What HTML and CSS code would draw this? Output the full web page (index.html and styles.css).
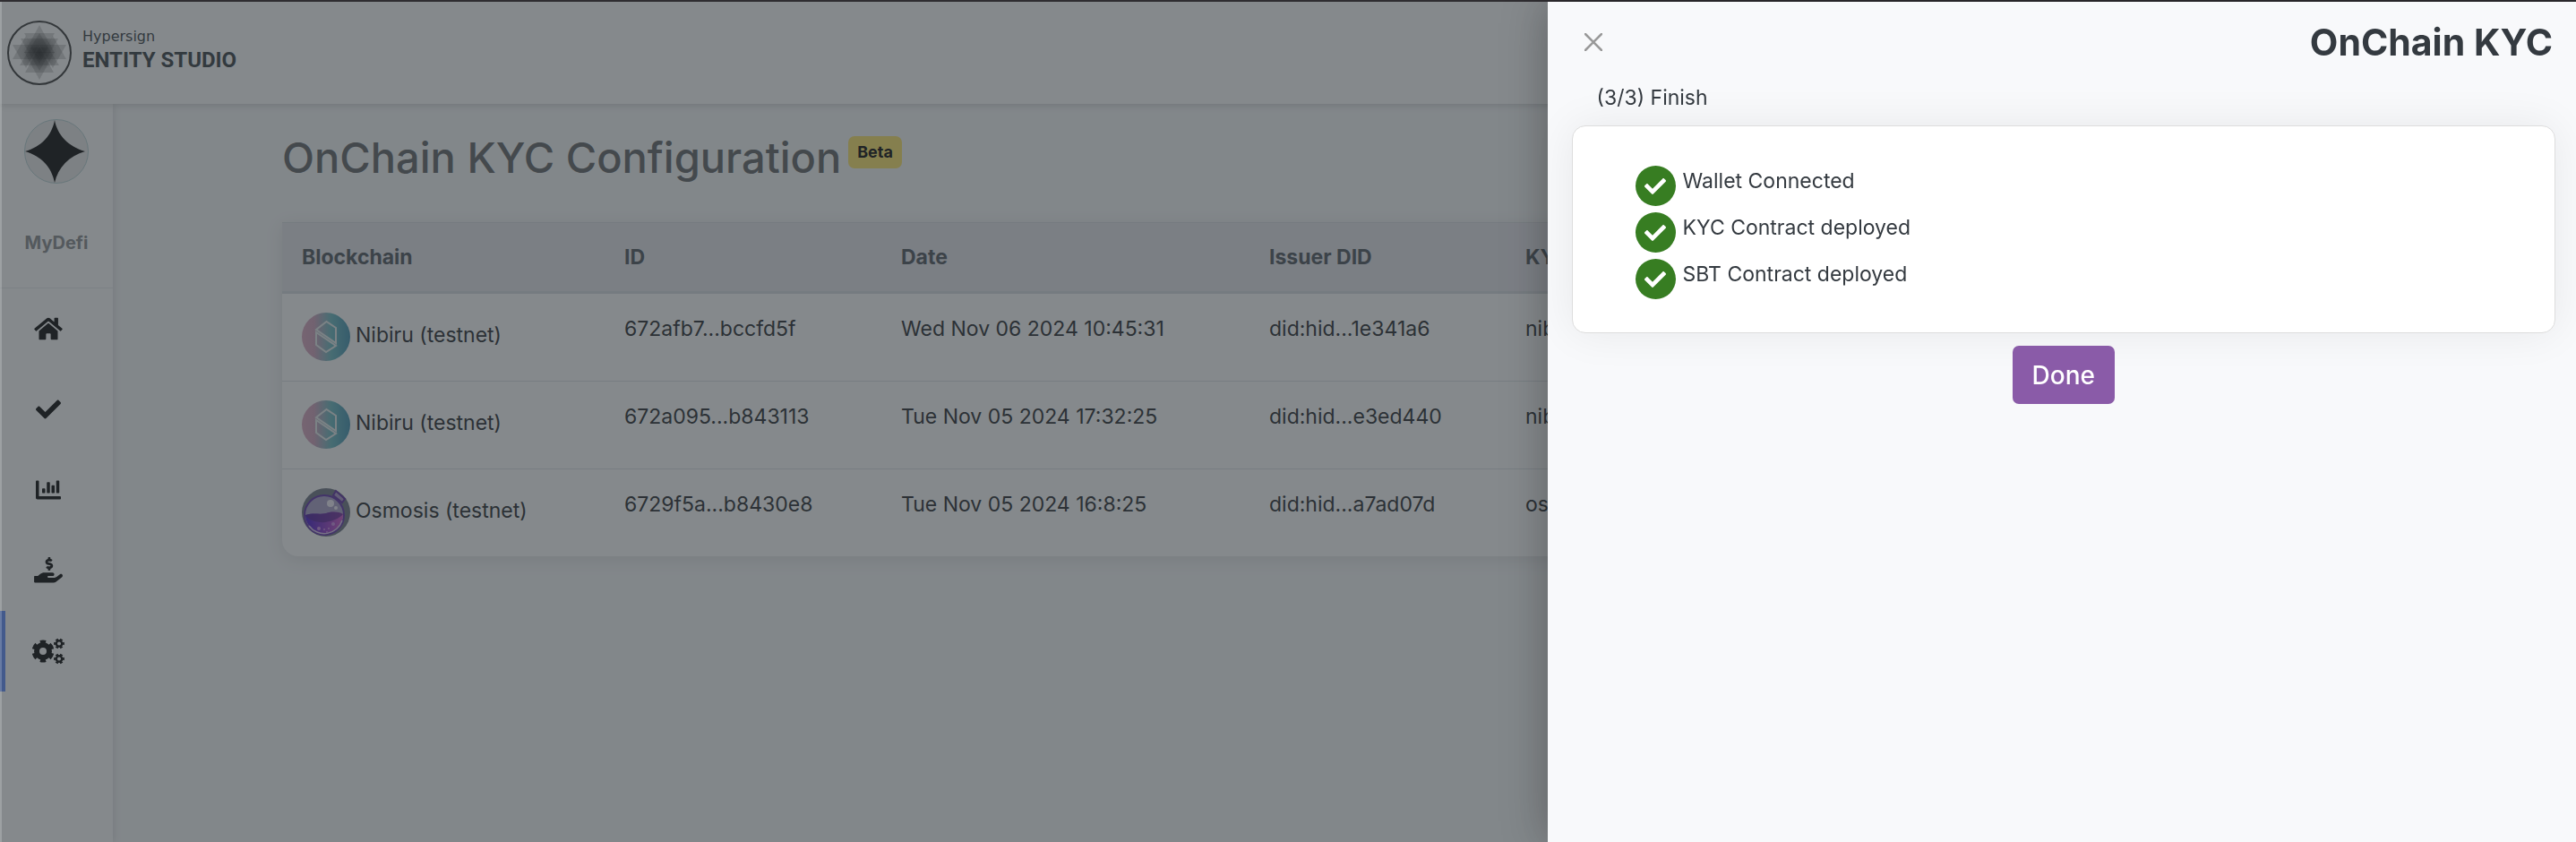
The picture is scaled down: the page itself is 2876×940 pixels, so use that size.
FILE: index.html
```html
<!DOCTYPE html>
<html lang="en">
<head>
  <meta charset="UTF-8">
  <title>Hypersign Entity Studio</title>
  <link rel="stylesheet" href="styles.css">
</head>
<body>
  <svg class="defs" aria-hidden="true">
    <defs>
      <linearGradient id="nibiruBg" x1="0" x2="1" y1="0" y2="0">
        <stop offset="0" stop-color="#d9a3bd"/>
        <stop offset="0.25" stop-color="#cf9fba"/>
        <stop offset="0.6" stop-color="#66b8c0"/>
        <stop offset="1" stop-color="#3a8fae"/>
      </linearGradient>
      <linearGradient id="osmoLiquid" x1="0" x2="1" y1="0" y2="0">
        <stop offset="0" stop-color="#3a10c8"/>
        <stop offset="1" stop-color="#d050c8"/>
      </linearGradient>
      <radialGradient id="logoFill">
        <stop offset="0" stop-color="#000" stop-opacity="0.6"/>
        <stop offset="1" stop-color="#000" stop-opacity="0"/>
      </radialGradient>
      <symbol id="nibiru" viewBox="0 0 54 54">
        <circle cx="27" cy="27" r="27" fill="url(#nibiruBg)"/>
        <path d="M16 19L27.500 10L38 17V34L16 19ZM16 22L38 37L27 44L16 36Z" fill="none" stroke="#e6eeee" stroke-width="2"/>
      </symbol>
      <symbol id="osmosis" viewBox="0 0 54 54">
        <circle cx="27" cy="27" r="27" fill="#6a7080"/>
        <path d="M35 8L38 3L48 12L45 16Z" fill="#a892c8" stroke="#5a2aa0" stroke-width="2"/>
        <circle cx="25" cy="30" r="22" fill="#a79fc8" stroke="#5b2ca8" stroke-width="2"/>
        <path d="M4 30C14 27 19 30 27 28C34 26 40 26 46 29A21 21 0 0 1 4 30Z" fill="url(#osmoLiquid)"/>
        <path d="M4 30C14 27 19 30 27 28C34 26 40 26 46 29C42 34 30 39 20 38C12 37 6 34 4 30Z" fill="#4a1a88" opacity="0.7"/>
        <path d="M8 42A21 21 0 0 0 45 36" fill="none" stroke="#d9c4ee" stroke-width="1.500"/>
        <ellipse cx="32" cy="17" rx="4" ry="4" fill="#f2eefa"/>
        <circle cx="38" cy="22" r="2" fill="#f2eefa"/>
        <g fill="#c98ae6">
          <circle cx="19" cy="45" r="2"/><circle cx="35" cy="40" r="2"/><circle cx="25" cy="46" r="1"/><circle cx="30" cy="45" r="1"/><circle cx="28" cy="49" r="1"/>
        </g>
      </symbol>
      <symbol id="tick" viewBox="0 0 512 512">
        <path d="M173.898 439.404l-166.4-166.4c-9.997-9.997-9.997-26.206 0-36.204l36.203-36.204c9.997-9.998 26.207-9.998 36.204 0L192 312.690 432.095 72.596c9.997-9.997 26.207-9.997 36.204 0l36.203 36.204c9.997 9.997 9.997 26.206 0 36.204l-294.400 294.401c-9.998 9.997-26.207 9.997-36.204-.001z"/>
      </symbol>
    </defs>
  </svg>

  <header class="topbar">
    <a href="#" class="brand">
      <svg class="brand-mark" viewBox="0 0 72 72" aria-hidden="true">
        <circle cx="36" cy="36" r="35" fill="none" stroke="#333" stroke-width="2"/>
        <g fill="#222" fill-opacity="0.2">
          <path d="M36 5L53 36H19Z"/>
          <path d="M36 66L53 35H19Z"/>
          <path d="M6 43L21 17L36 43Z"/>
          <path d="M66 43L51 17L36 43Z"/>
          <path d="M6 27H36L21 53Z"/>
          <path d="M66 27H36L51 53Z"/>
          <path d="M19 14H53L36 44Z"/>
          <path d="M20 58H52L36 29Z"/>
          <path d="M15 20H57L36 56Z"/>
          <path d="M14 50H58L36 14Z"/>
          <path d="M26 30H46L36 48Z"/>
        </g>
        <circle cx="36" cy="36" r="20" fill="url(#logoFill)"/>
      </svg>
      <span class="brand-text">
        <span class="brand-small">Hypersign</span>
        <span class="brand-big">ENTITY STUDIO</span>
      </span>
    </a>
  </header>

  <div class="layout">
    <nav class="sidebar">
      <div class="profile">
        <svg class="avatar" viewBox="0 0 72 72" aria-hidden="true">
          <circle cx="36" cy="36" r="35.500" fill="#ececec" stroke="#b4cfd2"/>
          <path d="M34 1C37 18 50 31 68 36C50 41 38 54 34 71C31 54 19 41 1 36C19 31 31 18 34 1Z"/>
        </svg>
        <span class="profile-name">MyDefi</span>
      </div>
      <a href="#" class="nav-item" aria-label="Home">
        <svg class="nav-icon" viewBox="0 0 576 512"><path d="M280.370 148.260L96 300.110V464a16 16 0 0 0 16 16l112.060-.290a16 16 0 0 0 15.920-16V368a16 16 0 0 1 16-16h64a16 16 0 0 1 16 16v95.640a16 16 0 0 0 16 16.050L464 480a16 16 0 0 0 16-16V300L295.670 148.260a12.190 12.190 0 0 0-15.300 0zM571.600 251.470L488 182.560V44.050a12 12 0 0 0-12-12h-56a12 12 0 0 0-12 12v72.610L318.470 43a48 48 0 0 0-61 0L4.340 251.470a12 12 0 0 0-1.600 16.900l25.500 31A12 12 0 0 0 45.150 301l235.220-193.740a12.190 12.190 0 0 1 15.300 0L530.900 301a12 12 0 0 0 16.900-1.600l25.500-31a12 12 0 0 0-1.700-16.930z"/></svg>
      </a>
      <a href="#" class="nav-item" aria-label="Verify">
        <svg class="nav-icon"><use href="#tick"/></svg>
      </a>
      <a href="#" class="nav-item" aria-label="Usage">
        <svg class="nav-icon" viewBox="0 0 512 512"><path d="M332.800 320h38.400c6.400 0 12.800-6.400 12.800-12.800V172.800c0-6.400-6.400-12.800-12.800-12.800h-38.400c-6.400 0-12.800 6.400-12.800 12.800v134.400c0 6.400 6.400 12.800 12.800 12.800zm96 0h38.400c6.400 0 12.800-6.400 12.800-12.800V76.800c0-6.400-6.400-12.800-12.800-12.800h-38.400c-6.400 0-12.800 6.400-12.800 12.800v230.400c0 6.400 6.400 12.800 12.800 12.800zm-288 0h38.400c6.400 0 12.800-6.400 12.800-12.800v-70.400c0-6.400-6.400-12.800-12.800-12.800h-38.400c-6.400 0-12.800 6.400-12.800 12.800v70.400c0 6.400 6.400 12.800 12.800 12.800zm96 0h38.400c6.400 0 12.800-6.400 12.800-12.800V108.800c0-6.400-6.400-12.800-12.800-12.800h-38.400c-6.400 0-12.800 6.400-12.800 12.800v198.400c0 6.400 6.400 12.800 12.800 12.800zM496 384H64V80c0-8.840-7.160-16-16-16H16C7.160 64 0 71.160 0 80v336c0 17.670 14.330 32 32 32h464c8.840 0 16-7.160 16-16v-32c0-8.840-7.160-16-16-16z"/></svg>
      </a>
      <a href="#" class="nav-item" aria-label="Billing">
        <svg class="nav-icon nav-icon-lg" viewBox="0 0 544 512"><path d="M257.600 144.300l50 14.300c3.600 1 6.100 4.400 6.100 8.100 0 4.600-3.800 8.400-8.400 8.400h-32.800c-3.600 0-7.100-.8-10.300-2.200-4.800-2.200-10.400-1.700-14.100 2l-17.500 17.500c-5.300 5.300-4.700 14.300 1.500 18.400 9.500 6.300 20.400 10.100 31.800 11.500V240c0 8.800 7.200 16 16 16h16c8.800 0 16-7.200 16-16v-17.600c30.300-3.600 53.300-31 49.300-63-2.900-23-20.700-41.300-42.900-47.700l-50-14.300c-3.600-1-6.100-4.400-6.100-8.100 0-4.600 3.800-8.400 8.400-8.400h32.800c3.600 0 7.100.8 10.300 2.200 4.800 2.200 10.400 1.700 14.100-2l17.500-17.500c5.300-5.300 4.700-14.300-1.500-18.400-9.500-6.300-20.400-10.100-31.800-11.500V16c0-8.800-7.200-16-16-16h-16c-8.800 0-16 7.200-16 16v17.600c-30.300 3.600-53.300 31-49.300 63 2.900 23 20.600 41.300 42.900 47.700zM533.900 328.100c-11.800-10.700-30.200-10-42.600 0L430.300 377c-11.400 9.100-25.400 14-40 14H272c-8.800 0-16-7.200-16-16s7.200-16 16-16h78.300c16 0 30.800-10.900 33.400-26.700 3.300-20-12.100-37.300-31.600-37.300H192c-27 0-53.100 9.300-74.100 26.300L71.400 359H16c-8.800 0-16 7.200-16 16v96c0 8.800 7.200 16 16 16h356.800c14.500 0 28.600-4.900 40-14L533 379c15-12 16-37 .9-50.900z"/></svg>
      </a>
      <a href="#" class="nav-item active" aria-label="Configuration">
        <svg class="nav-icon nav-icon-wide" viewBox="0 0 36 30" fill="none" stroke="#000">
          <circle cx="12" cy="15" r="7" stroke-width="6"/>
          <circle cx="12" cy="15" r="10.500" stroke-width="4" pathLength="360" stroke-dasharray="34 26" stroke-dashoffset="-13"/>
          <circle cx="30" cy="6.500" r="3.200" stroke-width="2.400"/>
          <circle cx="30" cy="6.500" r="4.800" stroke-width="2.200" pathLength="360" stroke-dasharray="34 26" stroke-dashoffset="17"/>
          <circle cx="30" cy="23.500" r="3.200" stroke-width="2.400"/>
          <circle cx="30" cy="23.500" r="4.800" stroke-width="2.200" pathLength="360" stroke-dasharray="34 26" stroke-dashoffset="17"/>
        </svg>
      </a>
    </nav>

    <main class="content">
      <div class="page-title">
        <h1>OnChain KYC Configuration</h1>
        <span class="badge">Beta</span>
      </div>

      <table class="config-table">
        <colgroup>
          <col class="col-chain">
          <col class="col-id">
          <col class="col-date">
          <col class="col-did">
          <col>
        </colgroup>
        <thead>
          <tr>
            <th>Blockchain</th>
            <th>ID</th>
            <th>Date</th>
            <th>Issuer DID</th>
            <th>KYC Contract</th>
          </tr>
        </thead>
        <tbody>
          <tr>
            <td><svg class="chain-icon"><use href="#nibiru"/></svg>Nibiru (testnet)</td>
            <td>672afb7...bccfd5f</td>
            <td>Wed Nov 06 2024 10:45:31</td>
            <td>did:hid...1e341a6</td>
            <td>nibi</td>
          </tr>
          <tr>
            <td><svg class="chain-icon"><use href="#nibiru"/></svg>Nibiru (testnet)</td>
            <td>672a095...b843113</td>
            <td>Tue Nov 05 2024 17:32:25</td>
            <td>did:hid...e3ed440</td>
            <td>nibi</td>
          </tr>
          <tr>
            <td><svg class="chain-icon"><use href="#osmosis"/></svg>Osmosis (testnet)</td>
            <td>6729f5a...b8430e8</td>
            <td>Tue Nov 05 2024 16:8:25</td>
            <td>did:hid...a7ad07d</td>
            <td>osmo</td>
          </tr>
        </tbody>
      </table>
    </main>
  </div>

  <div class="backdrop"></div>

  <aside class="drawer" aria-labelledby="drawerTitle">
    <div class="drawer-header">
      <button type="button" class="close" aria-label="Close">
        <svg viewBox="0 0 20 20" aria-hidden="true"><path d="M1 1L19 19M19 1L1 19" stroke="#999" stroke-width="2.500" stroke-linecap="round"/></svg>
      </button>
      <h2 id="drawerTitle">OnChain KYC</h2>
    </div>
    <p class="step">(3/3) Finish</p>
    <ul class="card">
      <li><span class="check"><svg><use href="#tick"/></svg></span>Wallet Connected</li>
      <li><span class="check"><svg><use href="#tick"/></svg></span>KYC Contract deployed</li>
      <li><span class="check"><svg><use href="#tick"/></svg></span>SBT Contract deployed</li>
    </ul>
    <button type="button" class="done">Done</button>
  </aside>
</body>
</html>
```
FILE: styles.css
```css
* {
  box-sizing: border-box;
}
body {
  margin: 0;
  min-height: 100vh;
  display: flex;
  flex-direction: column;
  border-top: 2px solid #2f2d31;
  background: #f8f9fa;
  color: #212529;
  font-family: Inter, "Liberation Sans", sans-serif;
  font-size: 23px;
  line-height: 36px;
}
.defs {
  position: absolute;
  width: 0;
  height: 0;
}

/* top bar */
.topbar {
  position: relative;
  display: flex;
  align-items: center;
  height: 114px;
  padding-left: 8px;
  background: #fff;
  box-shadow: 0 2px 8px rgba(0, 0, 0, 0.16);
}
.brand {
  display: flex;
  align-items: center;
  gap: 12px;
  color: #343a40;
  text-decoration: none;
}
.brand-mark {
  width: 72px;
  height: 72px;
}
.brand-text {
  display: flex;
  flex-direction: column;
}
.brand-small {
  font-family: "DejaVu Sans", sans-serif;
  font-size: 16px;
  line-height: 16px;
}
.brand-big {
  font-family: Roboto, "Liberation Sans", sans-serif;
  font-size: 24px;
  font-weight: bold;
  line-height: 36px;
}

/* sidebar */
.layout {
  display: flex;
  flex: 1;
}
.sidebar {
  width: 126px;
  background: #fff;
  box-shadow: 2px 0 8px rgba(0, 0, 0, 0.1);
}
.profile {
  display: flex;
  flex-direction: column;
  align-items: center;
  gap: 48px;
  height: 206px;
  padding-top: 17px;
  border-bottom: 1px solid #e9ecef;
}
.avatar {
  width: 72px;
  height: 72px;
}
.profile-name {
  color: #84878a;
  font-size: 20px;
  font-weight: 700;
}
.nav-item {
  display: flex;
  align-items: center;
  height: 90px;
  padding-left: 30px;
  border-left: 6px solid transparent;
}
.nav-item.active {
  border-left-color: #5a89ff;
}
.nav-icon {
  width: 36px;
  height: 28px;
}
.nav-icon-lg,
.nav-icon-wide {
  height: 30px;
}

/* configuration list */
.content {
  flex: 1;
  padding: 28px 189px;
}
.page-title {
  display: flex;
  align-items: flex-start;
  gap: 8px;
  margin-bottom: 40px;
}
.page-title h1 {
  margin: 0;
  color: #5c6063;
  font-size: 47px;
  font-weight: 500;
  line-height: 64px;
}
.badge {
  margin-top: 8px;
  padding: 0 10px;
  border-radius: 7px;
  background: #ffe664;
  color: #000;
  font-size: 18px;
  font-weight: 700;
}
.config-table {
  width: 100%;
  table-layout: fixed;
  border-spacing: 0;
  border-radius: 0 0 18px 18px;
  background: #fff;
  box-shadow: 0 4px 20px rgba(0, 0, 0, 0.1);
}
.col-chain {
  width: 360px;
}
.col-id {
  width: 309px;
}
.col-date {
  width: 411px;
}
.col-did {
  width: 286px;
}
.config-table th {
  padding: 20px 22px;
  border-top: 1px solid #d8dce0;
  border-bottom: 3px solid #d8dce0;
  background: #e7e6ec;
  color: #495057;
  font-weight: 700;
  text-align: left;
}
.config-table td {
  padding: 21px 22px 22px;
  border-bottom: 1px solid #dee2e6;
  vertical-align: top;
}
.config-table tr:last-child td {
  border-bottom: none;
}
.chain-icon {
  width: 54px;
  height: 54px;
  margin-right: 6px;
  vertical-align: middle;
}

/* drawer */
.backdrop {
  position: fixed;
  inset: 2px 0 0;
  border-left: 2px solid rgba(255, 255, 255, 0.2);
  background: rgba(52, 58, 64, 0.6);
}
.drawer {
  position: fixed;
  inset: 2px 0 0 auto;
  width: calc(40% - 2px);
  padding: 15px 23px 16px 27px;
  display: flex;
  flex-direction: column;
  background: #f8f9fb;
  color: #343a40;
  box-shadow: 0 0 48px rgba(0, 0, 0, 0.3);
}
.drawer-header {
  display: flex;
  align-items: center;
  justify-content: space-between;
  padding: 0 3px 0 14px;
}
.drawer-header h2 {
  margin: 0;
  font-size: 41px;
  font-weight: 700;
  line-height: 60px;
}
.close {
  display: flex;
  padding: 0;
  border: none;
  background: none;
  cursor: pointer;
}
.close svg {
  width: 20px;
  height: 20px;
}
.step {
  margin: 14px 28px 13px;
}
.card {
  display: flex;
  flex-direction: column;
  gap: 7px;
  margin: 0 0 14px;
  padding: 44px 70px 37px;
  border: 1px solid #ddd;
  border-radius: 15px;
  background: #fff;
  box-shadow: 0 0 48px rgba(0, 0, 0, 0.07);
  list-style: none;
}
.card li {
  display: flex;
  gap: 8px;
  line-height: 34px;
}
.check {
  display: flex;
  align-items: center;
  justify-content: center;
  width: 45px;
  height: 45px;
  border-radius: 50%;
  background: #377d22;
  fill: #fff;
}
.check svg {
  width: 24px;
  height: 24px;
}
.done {
  align-self: center;
  height: 65px;
  padding: 0 22px;
  border: none;
  border-radius: 7px;
  background: #8a5ba8;
  color: #fff;
  font-family: inherit;
  font-size: 28px;
  font-weight: 500;
  cursor: pointer;
}
```
